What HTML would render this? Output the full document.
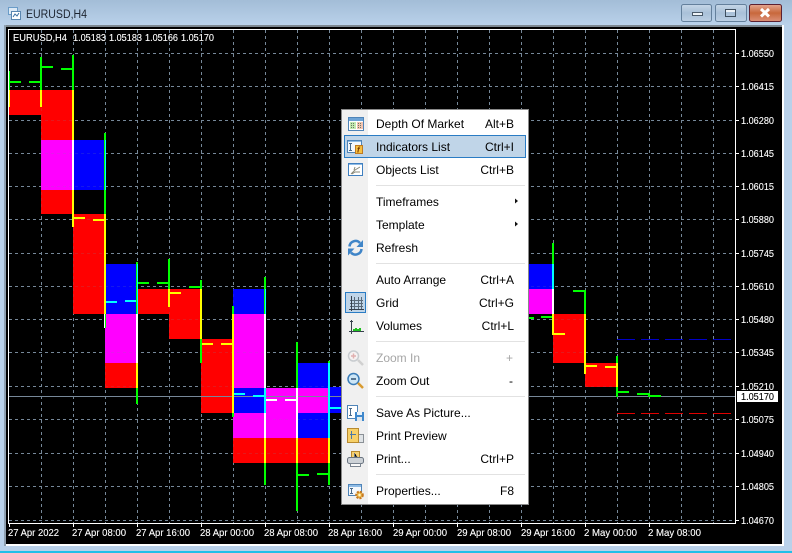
<!DOCTYPE html>
<html><head><meta charset="utf-8"><style>
html,body{margin:0;padding:0;width:792px;height:553px;overflow:hidden;background:#b9d1ea}
svg{display:block;position:absolute;left:0;top:0}
text{font-family:"Liberation Sans",sans-serif;white-space:pre}
.p,.t{font-size:10.5px;fill:#fff;stroke:#fff;stroke-width:.12px}
.m{font-size:12px;fill:#000}
.s{font-size:12px;fill:#000;text-anchor:end}
.d{fill:#a6a6a6}
</style></head><body>
<svg width="792" height="553" viewBox="0 0 792 553" xmlns="http://www.w3.org/2000/svg">
<defs>
<linearGradient id="tb" x1="0" y1="0" x2="0" y2="1"><stop offset="0" stop-color="#a3bdd7"/><stop offset="1" stop-color="#b9d1ea"/></linearGradient>
<linearGradient id="bt" x1="0" y1="0" x2="0" y2="1"><stop offset="0" stop-color="#c6d7e8"/><stop offset=".5" stop-color="#a9c0d8"/><stop offset="1" stop-color="#bcd0e4"/></linearGradient>
<linearGradient id="cl" x1="0" y1="0" x2="0" y2="1"><stop offset="0" stop-color="#e4a690"/><stop offset=".5" stop-color="#c8683c"/><stop offset="1" stop-color="#dc9078"/></linearGradient>
</defs>
<!-- window -->
<rect width="792" height="553" fill="#b9d1ea"/>
<rect width="792" height="25" fill="url(#tb)"/>
<rect x="0" y="551" width="792" height="2" fill="#22bfe8"/>
<rect x="4" y="25" width="780" height="521" fill="#fff"/>
<rect x="4" y="25" width="778" height="2" fill="#7c8790"/>
<rect x="4" y="25" width="2" height="521" fill="#8fa0b0"/>
<rect x="6" y="27" width="776" height="517" fill="#000"/>
<!-- title icon -->
<g shape-rendering="crispEdges">
<rect x="8.500" y="7.500" width="9" height="7" fill="#dce9f5" stroke="#6a9cc8"/>
<rect x="11.500" y="11.500" width="9" height="8" fill="#fff" stroke="#5a86b0"/>
</g>
<path d="M13 17l2-3 2 2 2-3" fill="none" stroke="#3a6ea0"/>
<text x="26" y="18" font-size="11.500" fill="#1c2430" textLength="61" lengthAdjust="spacingAndGlyphs">EURUSD,H4</text>
<!-- window buttons -->
<rect x="681.500" y="4.500" width="30" height="17" rx="2" fill="url(#bt)" stroke="#64809c"/>
<rect x="692.500" y="12.500" width="10" height="3" fill="#eef3f8" stroke="#4a5a6a"/>
<rect x="715.500" y="4.500" width="31" height="17" rx="2" fill="url(#bt)" stroke="#64809c"/>
<rect x="725.500" y="9.500" width="10" height="7" fill="none" stroke="#3e4e5e"/><rect x="726" y="10" width="9" height="2" fill="#eef3f8"/>
<rect x="749.500" y="4.500" width="32" height="17" rx="2" fill="url(#cl)" stroke="#5c2030"/>
<path d="M761 9l8 7.500M769 9l-8 7.500" stroke="#fff" stroke-width="3"/>

<!-- chart -->
<g shape-rendering="crispEdges">
<path id="gr" fill="none" stroke="#778899" stroke-dasharray="3 3" d="M9 53.500H735M9 86.500H735M9 120.500H735M9 153.500H735M9 186.500H735M9 219.500H735M9 253.500H735M9 286.500H735M9 319.500H735M9 352.500H735M9 386.500H735M9 419.500H735M9 453.500H735M9 486.500H735M9 520.500H735M41.500 30V523M73.500 30V523M105.500 30V523M137.500 30V523M169.500 30V523M201.500 30V523M233.500 30V523M265.500 30V523M297.500 30V523M329.500 30V523M361.500 30V523M393.500 30V523M425.500 30V523M457.500 30V523M489.500 30V523M521.500 30V523M553.500 30V523M585.500 30V523M617.500 30V523M649.500 30V523M681.500 30V523M713.500 30V523"/>
<!-- bodies -->
<g fill="#f00">
<rect x="9" y="90" width="32" height="25"/><rect x="41" y="90" width="32" height="50"/><rect x="41" y="190" width="32" height="24"/>
<rect x="73" y="214" width="32" height="100"/><rect x="105" y="363" width="32" height="25"/><rect x="137" y="289" width="32" height="25"/>
<rect x="169" y="289" width="32" height="50"/><rect x="201" y="339" width="32" height="74"/><rect x="233" y="438" width="32" height="25"/>
<rect x="265" y="438" width="32" height="25"/><rect x="297" y="438" width="32" height="25"/>
<rect x="553" y="314" width="32" height="49"/><rect x="585" y="363" width="32" height="24"/>
</g>
<g fill="#f0f">
<rect x="41" y="140" width="32" height="50"/><rect x="105" y="314" width="32" height="49"/><rect x="233" y="314" width="32" height="74"/>
<rect x="233" y="413" width="32" height="25"/><rect x="265" y="388" width="32" height="50"/><rect x="297" y="388" width="32" height="25"/>
<rect x="529" y="289" width="24" height="25"/>
</g>
<g fill="#00f">
<rect x="73" y="140" width="32" height="50"/><rect x="105" y="264" width="32" height="50"/><rect x="233" y="289" width="32" height="25"/>
<rect x="233" y="388" width="32" height="25"/><rect x="297" y="363" width="32" height="25"/><rect x="297" y="413" width="32" height="25"/>
<rect x="329" y="387" width="12" height="26"/><rect x="529" y="264" width="24" height="25"/>
</g>
<use href="#gr" opacity=".18"/>
<!-- price line -->
<rect x="9" y="396" width="726" height="1" fill="#778899"/>
<!-- lines -->
<path fill="none" stroke="#0000c8" stroke-dasharray="18 6" d="M617 339.500H731"/>
<path fill="none" stroke="#e00000" stroke-dasharray="18 6" d="M617 413.500H731"/>
<!-- green wicks -->
<g fill="#0f0">
<rect x="9" y="71" width="1" height="19"/><rect x="40" y="57" width="2" height="33"/><rect x="72" y="55" width="2" height="35"/>
<rect x="104" y="133" width="2" height="81"/><rect x="104" y="314" width="2" height="14"/><rect x="136" y="262" width="2" height="142"/>
<rect x="168" y="259" width="2" height="30"/><rect x="200" y="280" width="2" height="83"/><rect x="232" y="306" width="2" height="111"/>
<rect x="264" y="277" width="2" height="208"/><rect x="296" y="342" width="2" height="169"/><rect x="328" y="361" width="2" height="124"/>
<rect x="552" y="243" width="2" height="92"/><rect x="584" y="290" width="2" height="84"/><rect x="616" y="356" width="2" height="41"/><rect x="648" y="393" width="2" height="4"/>
<rect x="10" y="81" width="11" height="2"/><rect x="29" y="81" width="11" height="2"/><rect x="42" y="66" width="11" height="2"/><rect x="61" y="68" width="11" height="2"/>
<rect x="138" y="282" width="11" height="2"/><rect x="157" y="282" width="11" height="2"/><rect x="189" y="286" width="11" height="2"/>
<rect x="298" y="474" width="11" height="2"/><rect x="317" y="473" width="11" height="2"/>
<rect x="529" y="317" width="5" height="2"/><rect x="541" y="316" width="11" height="2"/><rect x="573" y="290" width="11" height="2"/>
<rect x="618" y="391" width="11" height="2"/><rect x="637" y="393" width="11" height="2"/><rect x="650" y="395" width="11" height="2"/>
</g>
<!-- yellow -->
<g fill="#ff0">
<rect x="9" y="90" width="1" height="17"/><rect x="40" y="90" width="2" height="17"/><rect x="72" y="90" width="2" height="50"/><rect x="72" y="190" width="2" height="37"/>
<rect x="104" y="214" width="2" height="100"/><rect x="136" y="363" width="2" height="25"/><rect x="168" y="289" width="2" height="18"/><rect x="200" y="289" width="2" height="50"/>
<rect x="232" y="314" width="2" height="99"/><rect x="264" y="438" width="2" height="25"/><rect x="296" y="438" width="2" height="25"/><rect x="328" y="438" width="2" height="25"/>
<rect x="552" y="314" width="2" height="21"/><rect x="584" y="314" width="2" height="60"/><rect x="616" y="363" width="2" height="24"/>
<rect x="74" y="217" width="11" height="2"/><rect x="93" y="219" width="11" height="2"/><rect x="170" y="292" width="11" height="2"/>
<rect x="202" y="343" width="11" height="2"/><rect x="221" y="343" width="11" height="2"/>
<rect x="554" y="333" width="11" height="2"/><rect x="586" y="365" width="11" height="2"/><rect x="605" y="366" width="11" height="2"/>
</g>
<!-- cyan -->
<g fill="#0ff">
<rect x="105" y="140" width="1" height="50"/><rect x="137" y="264" width="1" height="50"/><rect x="265" y="289" width="1" height="25"/><rect x="264" y="388" width="2" height="25"/>
<rect x="328" y="363" width="2" height="75"/><rect x="552" y="264" width="2" height="25"/>
<rect x="106" y="301" width="11" height="2"/><rect x="125" y="300" width="11" height="2"/><rect x="234" y="393" width="11" height="2"/><rect x="253" y="395" width="11" height="2"/><rect x="330" y="407" width="11" height="2"/>
</g>
<!-- white -->
<g fill="#fff">
<rect x="72" y="140" width="2" height="50"/><rect x="104" y="314" width="1" height="14"/><rect x="136" y="314" width="2" height="49"/><rect x="264" y="314" width="2" height="74"/><rect x="264" y="413" width="2" height="25"/>
<rect x="296" y="388" width="2" height="50"/><rect x="552" y="289" width="2" height="25"/>
<rect x="266" y="399" width="11" height="2"/><rect x="285" y="399" width="11" height="2"/>
</g>
<!-- frame -->
<path fill="none" stroke="#fff" d="M8.500 29.500H735.500V523.500H8.500Z"/>
<path fill="none" stroke="#fff" d="M735 53.500h4M735 86.500h4M735 120.500h4M735 153.500h4M735 186.500h4M735 219.500h4M735 253.500h4M735 286.500h4M735 319.500h4M735 352.500h4M735 386.500h4M735 419.500h4M735 453.500h4M735 486.500h4M735 520.500h4M9.500 524v3M73.500 524v3M137.500 524v3M201.500 524v3M265.500 524v3M329.500 524v3M393.500 524v3M457.500 524v3M521.500 524v3M585.500 524v3M649.500 524v3"/>
<rect x="737" y="391" width="41" height="11" fill="#fff"/>
</g>
<!-- header text -->
<text class="p" x="13" y="41" textLength="54" lengthAdjust="spacingAndGlyphs">EURUSD,H4</text>
<text class="p" x="73" y="41" textLength="33" lengthAdjust="spacingAndGlyphs">1.05183</text><text class="p" x="109" y="41" textLength="33" lengthAdjust="spacingAndGlyphs">1.05183</text><text class="p" x="145" y="41" textLength="33" lengthAdjust="spacingAndGlyphs">1.05166</text><text class="p" x="181" y="41" textLength="33" lengthAdjust="spacingAndGlyphs">1.05170</text>
<!-- prices -->
<text class="p" x="741" y="57" textLength="33" lengthAdjust="spacingAndGlyphs">1.06550</text><text class="p" x="741" y="90" textLength="33" lengthAdjust="spacingAndGlyphs">1.06415</text><text class="p" x="741" y="124" textLength="33" lengthAdjust="spacingAndGlyphs">1.06280</text><text class="p" x="741" y="157" textLength="33" lengthAdjust="spacingAndGlyphs">1.06145</text>
<text class="p" x="741" y="190" textLength="33" lengthAdjust="spacingAndGlyphs">1.06015</text><text class="p" x="741" y="223" textLength="33" lengthAdjust="spacingAndGlyphs">1.05880</text><text class="p" x="741" y="257" textLength="33" lengthAdjust="spacingAndGlyphs">1.05745</text><text class="p" x="741" y="290" textLength="33" lengthAdjust="spacingAndGlyphs">1.05610</text>
<text class="p" x="741" y="323" textLength="33" lengthAdjust="spacingAndGlyphs">1.05480</text><text class="p" x="741" y="356" textLength="33" lengthAdjust="spacingAndGlyphs">1.05345</text><text class="p" x="741" y="390" textLength="33" lengthAdjust="spacingAndGlyphs">1.05210</text><text class="p" x="741" y="400" textLength="33" lengthAdjust="spacingAndGlyphs" style="fill:#000;stroke:#000">1.05170</text>
<text class="p" x="741" y="423" textLength="33" lengthAdjust="spacingAndGlyphs">1.05075</text><text class="p" x="741" y="457" textLength="33" lengthAdjust="spacingAndGlyphs">1.04940</text><text class="p" x="741" y="490" textLength="33" lengthAdjust="spacingAndGlyphs">1.04805</text><text class="p" x="741" y="524" textLength="33" lengthAdjust="spacingAndGlyphs">1.04670</text>
<!-- times -->
<text class="t" x="8" y="536" textLength="51" lengthAdjust="spacingAndGlyphs">27 Apr 2022</text><text class="t" x="72" y="536" textLength="54" lengthAdjust="spacingAndGlyphs">27 Apr 08:00</text><text class="t" x="136" y="536" textLength="54" lengthAdjust="spacingAndGlyphs">27 Apr 16:00</text><text class="t" x="200" y="536" textLength="54" lengthAdjust="spacingAndGlyphs">28 Apr 00:00</text>
<text class="t" x="264" y="536" textLength="54" lengthAdjust="spacingAndGlyphs">28 Apr 08:00</text><text class="t" x="328" y="536" textLength="54" lengthAdjust="spacingAndGlyphs">28 Apr 16:00</text><text class="t" x="393" y="536" textLength="54" lengthAdjust="spacingAndGlyphs">29 Apr 00:00</text><text class="t" x="457" y="536" textLength="54" lengthAdjust="spacingAndGlyphs">29 Apr 08:00</text>
<text class="t" x="521" y="536" textLength="54" lengthAdjust="spacingAndGlyphs">29 Apr 16:00</text><text class="t" x="584" y="536" textLength="53" lengthAdjust="spacingAndGlyphs">2 May 00:00</text><text class="t" x="648" y="536" textLength="53" lengthAdjust="spacingAndGlyphs">2 May 08:00</text>

<!-- menu -->
<g shape-rendering="crispEdges">
<rect x="341.500" y="109.500" width="187" height="395" fill="#fff" stroke="#8a8a8a"/>
<rect x="342" y="110" width="26" height="394" fill="#f0f0f0"/>
<rect x="344.500" y="135.500" width="181" height="22" fill="#c0d5e8" stroke="#2a7cc4"/>
<rect x="345.500" y="292.500" width="20" height="20" fill="#c0d5e8" stroke="#2a7cc4"/>
<path stroke="#e2e2e2" d="M376 185.500H525M376 263.500H525M376 341.500H525M376 396.500H525M376 474.500H525"/>
</g>
<text class="m" x="376" y="128">Depth Of Market</text><text class="s" x="514" y="128">Alt+B</text>
<text class="m" x="376" y="151">Indicators List</text><text class="s" x="514" y="151">Ctrl+I</text>
<text class="m" x="376" y="174">Objects List</text><text class="s" x="514" y="174">Ctrl+B</text>
<text class="m" x="376" y="206">Timeframes</text><path d="M515 198.500l3 2.500-3 2.500z" fill="#111"/>
<text class="m" x="376" y="229">Template</text><path d="M515 221.500l3 2.500-3 2.500z" fill="#111"/>
<text class="m" x="376" y="252">Refresh</text>
<text class="m" x="376" y="284">Auto Arrange</text><text class="s" x="514" y="284">Ctrl+A</text>
<text class="m" x="376" y="307">Grid</text><text class="s" x="514" y="307">Ctrl+G</text>
<text class="m" x="376" y="330">Volumes</text><text class="s" x="514" y="330">Ctrl+L</text>
<text class="m d" x="376" y="362">Zoom In</text><text class="s d" x="513" y="362">+</text>
<text class="m" x="376" y="385">Zoom Out</text><text class="s" x="513" y="385">-</text>
<text class="m" x="376" y="417">Save As Picture...</text>
<text class="m" x="376" y="440">Print Preview</text>
<text class="m" x="376" y="463">Print...</text><text class="s" x="514" y="463">Ctrl+P</text>
<text class="m" x="376" y="495">Properties...</text><text class="s" x="514" y="495">F8</text>

<!-- icons -->
<!-- depth of market -->
<g shape-rendering="crispEdges">
<rect x="348.500" y="117.500" width="15" height="13" fill="#fff" stroke="#4f84b8"/>
<rect x="349" y="118" width="14" height="3" fill="#6ea4d6"/>
<rect x="350" y="122" width="6" height="7" fill="#c4eab0"/><rect x="357" y="122" width="6" height="7" fill="#f4c4b0"/>
<path stroke="#6a7a6a" stroke-dasharray="1 1" d="M351 123.500h4M351 125.500h4M351 127.500h4M358 123.500h4M358 125.500h4M358 127.500h4"/>
</g>
<!-- indicators -->
<g shape-rendering="crispEdges">
<rect x="347.500" y="140.500" width="14" height="12" fill="#f4f8fc" stroke="#4f84b8"/>
<rect x="348" y="141" width="13" height="1" fill="#8fbce6"/>
<path stroke="#4a6a8a" d="M350.500 143v8M349 143.500h3M349 150.500h3"/>
<rect x="355.500" y="145.500" width="7" height="8" fill="#f6c040" stroke="#c07a20"/>
</g>
<text x="357" y="152.500" font-size="8" font-style="italic" font-weight="bold" fill="#7a3a00">f</text>
<!-- objects -->
<g shape-rendering="crispEdges"><rect x="348.500" y="163.500" width="14" height="12" fill="#fff" stroke="#3f7fc0"/><rect x="349" y="164" width="13" height="1" fill="#8fbce6"/></g>
<path d="M351 174l4-4 5-3M352 174l3-2 5 0M354 170l1-3" fill="none" stroke="#8a8a7a"/>
<!-- refresh -->
<path d="M349.500 246.500a6 6 0 0 1 10.500-3.500" fill="none" stroke="#3f85c8" stroke-width="2.500"/>
<path d="M363 240v7h-6.500z" fill="#3f85c8"/>
<path d="M361.500 249a6 6 0 0 1-10.500 3.500" fill="none" stroke="#3f85c8" stroke-width="2.500"/>
<path d="M348 255.500v-7h6.500z" fill="#3f85c8"/>
<!-- grid -->
<g shape-rendering="crispEdges" fill="none">
<path stroke="#5a6a78" d="M354.500 297v12M358.500 297v12M361.500 297v12M350 300.500h13M350 303.500h13M350 306.500h13"/>
<path stroke="#36404c" d="M351.500 296v15M349 309.500h15"/>
</g>
<!-- volumes -->
<g shape-rendering="crispEdges">
<path d="M353 331v-2h2v-1h2v1h2v-1h2v3z" fill="#20c020"/>
<path fill="none" stroke="#36404c" d="M351.500 320v14M349 331.500h15M350 321.500h3"/>
</g>
<!-- zoom in -->
<circle cx="353.500" cy="356" r="5" fill="#f6f2f2" stroke="#c8ccd0" stroke-width="1.500"/>
<path d="M351 356h5M353.500 353.500v5" stroke="#e0b0b0" stroke-width="1.500"/>
<path d="M358 360l5 5" stroke="#d0d0d0" stroke-width="2.500"/>
<!-- zoom out -->
<circle cx="353.500" cy="379" r="5.500" fill="#cde6f6" stroke="#3a7cb8" stroke-width="1.500"/>
<path d="M351 379h5" stroke="#305070" stroke-width="1.500"/>
<path d="M358 383l5 5" stroke="#d89a30" stroke-width="2.500"/>
<!-- save -->
<g shape-rendering="crispEdges">
<rect x="347.500" y="405.500" width="10" height="13" fill="#fff" stroke="#4f84b8"/>
<path stroke="#4a6a8a" d="M350.500 408v8M349 408.500h3M349 415.500h3"/>
<rect x="355" y="412" width="9" height="9" fill="#3f88cc"/>
<rect x="357" y="412" width="5" height="3" fill="#e8f2fa"/><rect x="357" y="417" width="5" height="4" fill="#dfe6ec"/>
</g>
<!-- print preview -->
<g shape-rendering="crispEdges">
<rect x="356.500" y="434.500" width="7" height="8" fill="#dfe3e6" stroke="#8a9096"/>
<rect x="347.500" y="428.500" width="11" height="14" fill="#f6d068" stroke="#b88a30"/>
<path stroke="#4a78a8" d="M351.500 431v8M350 434.500h6"/>
</g>
<!-- print -->
<g shape-rendering="crispEdges">
<rect x="351.500" y="451.500" width="8" height="7" fill="#f6d070" stroke="#b88a30"/>
<path stroke="#6a7a8a" d="M354.500 453v4h3"/>
</g>
<rect x="347.500" y="457.500" width="16" height="6" rx="2" fill="#cdd2d7" stroke="#6a7480"/>
<rect x="350.500" y="463.500" width="10" height="3" fill="#fafafa" stroke="#7a8490" shape-rendering="crispEdges"/>
<!-- properties -->
<g shape-rendering="crispEdges">
<rect x="348.500" y="484.500" width="13" height="11" fill="#f4f8fc" stroke="#4f84b8"/>
<rect x="349" y="485" width="12" height="2" fill="#8fbce6"/>
<path stroke="#4a6a8a" d="M351.500 488v6M350 488.500h3M350 493.500h3"/>
</g>
<circle cx="359.500" cy="495" r="3.200" fill="#f0c050" stroke="#c87a20" stroke-width="2.200" stroke-dasharray="2 1"/>
<circle cx="359.500" cy="495" r="1.200" fill="#fff3c8"/>
</svg>
</body></html>
